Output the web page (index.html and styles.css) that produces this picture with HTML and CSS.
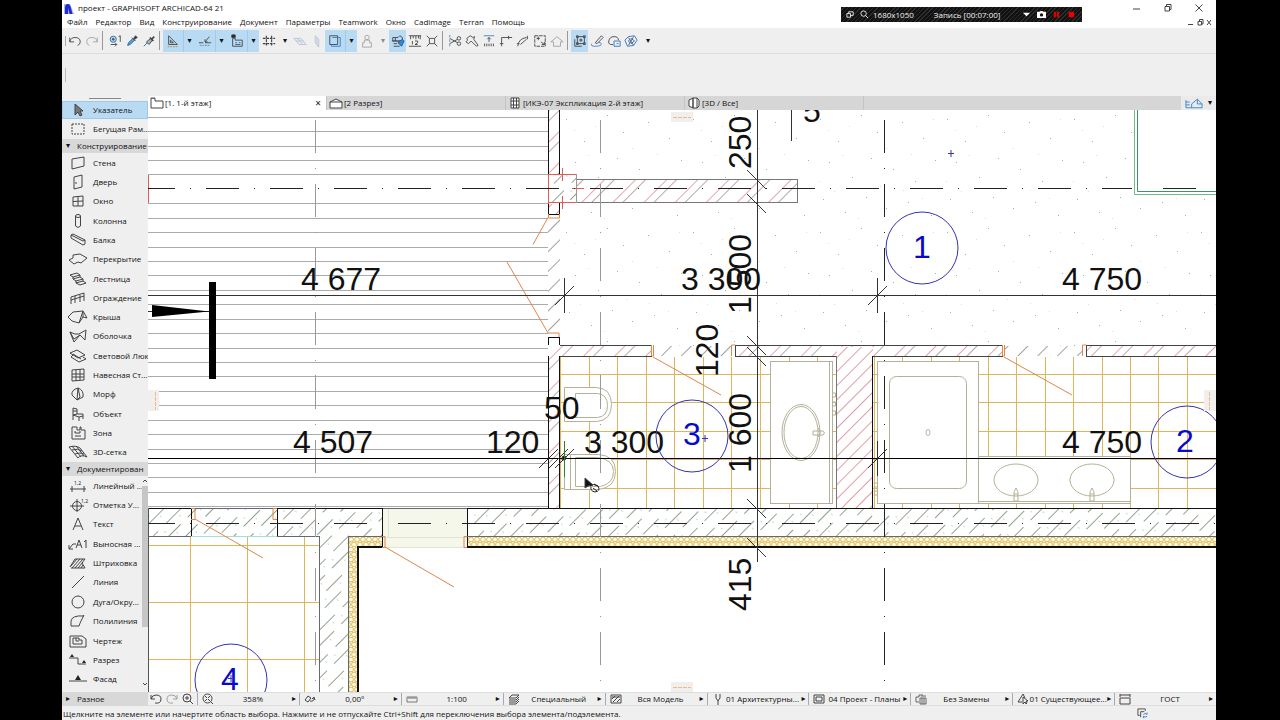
FILE: index.html
```html
<!DOCTYPE html>
<html lang="ru">
<head>
<meta charset="utf-8">
<title>проект - GRAPHISOFT ARCHICAD-64 21</title>
<link rel="stylesheet" href="styles.css">
</head>
<body>
<div class="app">
  <header class="titlebar">
    <svg class="logo" viewBox="0 0 10 11"><path d="M0 1h6l4 10H0z" fill="#a9b8ea"/><path d="M1 11V5q0-4 3-4 2 0 3 4l1.500 6h-3L4 5v6z" fill="#1f2bd0"/></svg>
    <h1>проект - GRAPHISOFT ARCHICAD-64 21</h1>
    <div class="wincontrols">
      <button aria-label="Свернуть"><svg viewBox="0 0 10 10"><path d="M1 6h7"/></svg></button>
      <button aria-label="Восстановить"><svg viewBox="0 0 10 10"><path d="M2 3.500h4.500v4.500H2zM3.500 3.500V1.500h4.500v5H6.500"/></svg></button>
      <button aria-label="Закрыть"><svg viewBox="0 0 10 10"><path d="M1.500 1.500l7 7M8.500 1.500l-7 7"/></svg></button>
    </div>
    <div class="recorder">
      <svg class="r-win" viewBox="0 0 10 10"><path d="M1 4h4v4H1zM3 4V2h5v4H5" /></svg>
      <svg class="r-mag" viewBox="0 0 10 10"><circle cx="4" cy="4" r="3"/><path d="M6 6l3 3"/></svg>
      <span class="r-size">1680x1050</span>
      <span class="r-time">Запись [00:07:00]</span>
      <svg class="r-down" viewBox="0 0 10 10"><path d="M1 3h8L5 7z" fill="#fff" stroke="none"/></svg>
      <svg class="r-cam" viewBox="0 0 10 10"><path d="M0 2h3l1-1h2l1 1h3v7H0z" fill="#fff" stroke="none"/><circle cx="5" cy="5.500" r="1.800" fill="#111" stroke="none"/></svg>
      <svg class="r-pause" viewBox="0 0 10 10"><path d="M2 2h2.500v6H2zM5.500 2H8v6H5.500z" fill="#d00" stroke="none"/></svg>
      <svg class="r-stop" viewBox="0 0 10 10"><path d="M2 2h6v6H2z" fill="#e00" stroke="none"/></svg>
    </div>
  </header>

  <nav class="menu">
    <button>Файл</button><button>Редактор</button><button>Вид</button><button>Конструирование</button><button>Документ</button><button>Параметры</button><button>Teamwork</button><button>Окно</button><button>Cadimage</button><button>Terran</button><button>Помощь</button>
    <span class="mdi"><svg viewBox="0 0 26 8"><path d="M1 6.500h5M11 3.500h3.500V7H11zM12.500 3.500V1.500H16V6h-1.500M20 2l4 5M24 2l-4 5"/></svg></span>
  </nav>

  <div class="toolbar">
    <i class="grip"></i>
    <button aria-label="Отменить"><svg viewBox="0 0 16 16"><path d="M2 4v5h5M2 9q1-5 6-5 6 0 6 5 0 3-3 4"/></svg></button>
    <button aria-label="Повторить" class="off"><svg viewBox="0 0 16 16"><path d="M14 4v5H9M14 9q-1-5-6-5-6 0-6 5 0 3 3 4"/></svg></button>
    <i class="sep"></i>
    <button aria-label="Найти и выбрать"><svg viewBox="0 0 16 16"><circle cx="6" cy="6" r="3.500" fill="#bcd8f0" stroke="#26639d"/><circle cx="6" cy="6" r="1" fill="#26639d"/><path d="M3 12h7l-2-2M10 12l-2 2M12 3l2-1v7"/></svg></button>
    <button aria-label="Пипетка"><svg viewBox="0 0 16 16"><path d="M3 13l1-3 5-5 2 2-5 5z" fill="#5b9ddc" stroke="#26639d"/><path d="M8 4l4 4M10 5l2-3 2 2-3 2z" fill="#333"/></svg></button>
    <button aria-label="Перенести параметры"><svg viewBox="0 0 16 16"><path d="M2 14l4-4" stroke="#26639d"/><path d="M5 9l3 3 4-5-2-2z" fill="#9fb6cc"/><path d="M9 4l4 4M11 6l3-3" stroke-width="2"/></svg></button>
    <i class="sep"></i>
    <div class="split on"><button aria-label="Направляющие"><svg viewBox="0 0 16 16"><path d="M3 2v10h10zM5 7v3h3.500z"/><path d="M2 14.500h12" stroke="#a78b4c" stroke-dasharray="2 1"/></svg></button><button class="dd" aria-label="Варианты направляющих">▾</button></div>
    <div class="split on"><button aria-label="Привязка"><svg viewBox="0 0 16 16"><path d="M1 10h5M8 10h7M8 9l5-6M8 6v3h3" /><path d="M2 13h11" stroke="#5689b8" stroke-dasharray="2 1"/></svg></button><button class="dd" aria-label="Варианты привязки">▾</button></div>
    <div class="split on"><button aria-label="Координаты"><svg viewBox="0 0 16 16"><path d="M3 5v9h11V7H6V5z"/><path d="M2 1h4v3H2z" fill="#222"/><path d="M6 10h2M10 10h2M6 12h6" stroke="#355b80"/></svg></button><button class="dd" aria-label="Варианты координат">▾</button></div>
    <div class="split"><button aria-label="Сетка"><svg viewBox="0 0 16 16"><path d="M5 2v12M11 2v12M1 5h14M1 11h14" stroke-width="1.300" stroke-dasharray="3 1"/></svg></button><button class="dd" aria-label="Варианты сетки">▾</button></div>
    <button aria-label="Плоскость" class="pale"><svg viewBox="0 0 16 16"><path d="M1 5h8l6 7H7zM4 8h8M5 5l6 7" fill="#dce8f3" stroke="#5f84a8"/></svg></button>
    <button aria-label="Вертикальная плоскость" class="pale"><svg viewBox="0 0 16 16"><path d="M6 2l4 4v9l-4-5zM8 4v8" fill="#dce3ee" stroke="#5f84a8"/></svg></button>
    <div class="split on"><button aria-label="Трассировка"><svg viewBox="0 0 16 16"><path d="M2 2h9v10H2z"/><path d="M5 4h9v10H4v-2" stroke="#2f7bd0"/></svg></button><button class="dd" aria-label="Варианты трассировки">▾</button></div>
    <div class="split off"><button aria-label="Гравитация"><svg viewBox="0 0 16 16"><circle cx="8" cy="4" r="2.500"/><path d="M5 7h6v3h2v5H3v-5h2z"/></svg></button><button class="dd" aria-label="Варианты гравитации">▾</button></div>
    <button aria-label="Группы" class="on"><svg viewBox="0 0 16 16"><path d="M2 8V4h6l2-2 3 2v4zM5 4v4M1 8h12M3 11h4M3 14h7"/><path d="M8 10l5-4 2 2-3 6z" fill="#2f8be0" stroke="#155a9c"/></svg></button>
    <button aria-label="Линейка"><svg viewBox="0 0 16 16"><path d="M1 2h14M3 2v4M6 2v3M9 2v4M12 2v3M1 14h14M5 8v4M8 8h3v2l-3 2h3M14 2v4"/></svg></button>
    <button aria-label="Начало координат"><svg viewBox="0 0 16 16"><path d="M5 5h6v6H5zM2 2l3 3M14 2l-3 3M2 14l3-3M14 14l-3-3"/></svg></button>
    <i class="sep"></i>
    <button aria-label="Разрезать"><svg viewBox="0 0 16 16"><circle cx="12.500" cy="5" r="2"/><circle cx="12.500" cy="11" r="2"/><path d="M11 6l-9 5M11 10L2 5"/><path d="M2 1v14" stroke="#6684ab" stroke-dasharray="3 2"/></svg></button>
    <button aria-label="Пересечь"><svg viewBox="0 0 16 16"><path d="M2 5l4-3 3 2 2-1-1 3 5 7-2 1-6-6-3 3-3-2 2-2z"/></svg></button>
    <button aria-label="Подогнать"><svg viewBox="0 0 16 16"><path d="M2 2h12" stroke="#3e7dd0"/><path d="M8 9V4M6 6l2-2 2 2M3 14v-3M5.500 14v-3M8 14v-3M10.500 14v-3M13 14v-3"/></svg></button>
    <button aria-label="Угол"><svg viewBox="0 0 16 16"><path d="M3 14V4h12M11 2v4M1 11h4"/></svg></button>
    <button aria-label="Сопряжение"><svg viewBox="0 0 16 16"><path d="M2 14q1-9 10-10M13 2v4M5 12l7-6M1 11h3"/></svg></button>
    <button aria-label="Изменить размер"><svg viewBox="0 0 16 16"><path d="M2 2h12v12H2z" stroke-dasharray="4 1"/><path d="M4 5h4M6 3v4M9 9l4 3M13 9v3h-3"/></svg></button>
    <button aria-label="Крыша" class="off"><svg viewBox="0 0 16 16"><path d="M1 9l7-6 7 6h-3v5H4V9z"/></svg></button>
    <i class="sep"></i>
    <button aria-label="Выбор" class="on"><svg viewBox="0 0 16 16"><path d="M5 3h8v8H5zM2 6v8h8M4 2h2v2H4zM12 2h2v2h-2zM12 10h2v2h-2zM4 10h2v2H4zM8 6h2v2H8z"/></svg></button>
    <button aria-label="Правка"><svg viewBox="0 0 16 16"><path d="M6 10l7-8 2 2-7 7z"/><path d="M2 11q-2 3 4 3 7 0 7-3-1-2-4-1" stroke="#3e7dd0"/></svg></button>
    <button aria-label="Облако"><svg viewBox="0 0 16 16"><path d="M7 12H4q-3-1-2-4 1-5 6-5 5 0 5 4"/><path d="M8 8h7v6H8zM11 11h2" stroke="#2f6fc0"/></svg></button>
    <button aria-label="Модель"><svg viewBox="0 0 16 16"><path d="M1 7l4-4 7-1 3 5-4 6-7 1z" stroke="#2f6fc0"/><path d="M5 4l6 9M11 3L5 13M8 5l4 3-4 3-3-3z" stroke="#3d5f8c"/></svg></button>
    <button class="dd last" aria-label="Ещё">▾</button>
  </div>

  <div class="infobox"><i></i></div>

  <div class="work">
    <aside class="toolbox">
      <i class="handle"></i>
      <button class="tool sel"><svg viewBox="0 0 20 14"><path d="M7 1v11l3-3 2 4 2-1-2-4h3z" fill="#777"/></svg><span>Указатель</span></button>
      <button class="tool marquee"><svg viewBox="0 0 20 14"><path d="M4 2h12v10H4z" stroke-dasharray="2 1"/></svg><span>Бегущая Рам...</span></button>
      <button class="group"><b>▾</b><span>Конструирование</span></button>
      <div class="tools design">
        <button class="tool"><svg viewBox="0 0 20 14"><path d="M4 3l12-2v9L4 13z"/></svg><span>Стена</span></button>
        <button class="tool"><svg viewBox="0 0 20 14"><path d="M6 2l8-2v12l-8 2zM8 7v2"/></svg><span>Дверь</span></button>
        <button class="tool"><svg viewBox="0 0 20 14"><path d="M5 3l10-1v10l-10 0zM10 2v10M5 7.500l10-.5"/></svg><span>Окно</span></button>
        <button class="tool"><svg viewBox="0 0 20 14"><ellipse cx="10" cy="2" rx="2.500" ry="1.500"/><path d="M7.500 2v10q2.500 3 5 0V2"/></svg><span>Колонна</span></button>
        <button class="tool"><svg viewBox="0 0 20 14"><path d="M3 2l2-1 12 6v4l-2 1L3 5zM3 2l12 6 2-1"/></svg><span>Балка</span></button>
        <button class="tool"><svg viewBox="0 0 20 14"><path d="M1 8l4-2V3l7-1 7 4-6 5-3-1-4 2z"/></svg><span>Перекрытие</span></button>
        <button class="tool"><svg viewBox="0 0 20 14"><path d="M2 3l7-2 3 2-7 2zM5 5v2l7-2V3M5 7l3 2 7-2-3-2M8 9v2l7-2V7M8 11l4 2 6-2-3-2"/></svg><span>Лестница</span></button>
        <button class="tool"><svg viewBox="0 0 20 14"><path d="M3 13V6l13-4v8M3 9l13-4M7 5v7M12 4v7"/></svg><span>Ограждение</span></button>
        <button class="tool"><svg viewBox="0 0 20 14"><path d="M0 7l5-5 10-1 4 7-4-1-4 6-7-2zM15 1l-4 12M15 7V2"/></svg><span>Крыша</span></button>
        <button class="tool"><svg viewBox="0 0 20 14"><path d="M2 3q5 3 9 2l7-4-1 10-5-5-6 7zM2 3l4 7 6-4"/></svg><span>Оболочка</span></button>
        <button class="tool"><svg viewBox="0 0 20 14"><path d="M2 4l7-3 8 5-7 3zM5 6l-2 2 8 5 7-3-3-2M5 5l8 5"/></svg><span>Световой Люк</span></button>
        <button class="tool"><svg viewBox="0 0 20 14"><path d="M4 2l12-1v11L4 13zM8 2v11M12 1v11M4 6h12M4 9h12"/></svg><span>Навесная Ст...</span></button>
        <button class="tool"><svg viewBox="0 0 20 14"><path d="M10 1Q3 3 4 8l5 5 6-3q1-7-5-9zM10 1L9 13M10 1l2 9-3 3"/></svg><span>Морф</span></button>
        <button class="tool"><svg viewBox="0 0 20 14"><path d="M5 1l4 1v5l6 0v5M5 1v12M5 8l6 2v4M9 7l-4 1M11 10l4-1M5 4h4"/></svg><span>Объект</span></button>
        <button class="tool"><svg viewBox="0 0 20 14"><path d="M4 1h5v3h3V1h1v3h4v9H4zM7 5v2h5V5M7 10h6"/></svg><span>Зона</span></button>
        <button class="tool"><svg viewBox="0 0 20 14"><path d="M1 2q7-2 11 1l7 9q-6-3-9 1zM4 1l9 11M8 1l8 10M4 5q6-2 10 1M7 9q5-2 9 0"/></svg><span>3D-сетка</span></button>
      </div>
      <button class="group"><b>▾</b><span>Документирован</span></button>
      <div class="tools doc">
        <button class="tool"><svg viewBox="0 0 20 14"><path d="M2 10h16M4 7v6M16 7v6"/><text x="6" y="6">1,2</text></svg><span>Линейный ...</span></button>
        <button class="tool"><svg viewBox="0 0 20 14"><circle cx="9" cy="8" r="4.500"/><path d="M2 8h14M9 1v13"/><text x="13" y="5">1,2</text></svg><span>Отметка У...</span></button>
        <button class="tool"><svg viewBox="0 0 20 14"><path d="M5 13l5-12 5 12M7 9h6"/></svg><span>Текст</span></button>
        <button class="tool"><svg viewBox="0 0 20 14"><path d="M1 12l4-5h3M1 8v4h4"/><path d="M8 11l3-8 3 8M9 8h4M16 5l2-2v8"/></svg><span>Выносная ...</span></button>
        <button class="tool"><svg viewBox="0 0 20 14"><path d="M2 11l5-8h10l-3 4 3 5H3M4 12L12 3M7 12l8-9M10 12l5-6M13 12l2-3M3 10l6-7"/></svg><span>Штриховка</span></button>
        <button class="tool"><svg viewBox="0 0 20 14"><path d="M4 13L16 1"/></svg><span>Линия</span></button>
        <button class="tool"><svg viewBox="0 0 20 14"><circle cx="10" cy="7" r="6"/></svg><span>Дуга/Окру...</span></button>
        <button class="tool"><svg viewBox="0 0 20 14"><path d="M16 1L13 7q-1 2-2 5H3V7q1-6 13-5"/></svg><span>Полилиния</span></button>
        <button class="tool"><svg viewBox="0 0 20 14"><path d="M2 2h12l4 3v8H2zM5 4v6h9V6h-3V4zM8 4v3h3"/></svg><span>Чертеж</span></button>
        <button class="tool"><svg viewBox="0 0 20 14"><path d="M1 5h9v6h8"/><path d="M2 4l2-3 2 3zM14 10l2-3 2 3z" fill="#222" stroke="none"/></svg><span>Разрез</span></button>
        <button class="tool"><svg viewBox="0 0 20 14"><path d="M1 9h18"/><path d="M7 8l3-5 3 5z" fill="#222" stroke="none"/></svg><span>Фасад</span></button>
        <div class="scroll"><svg viewBox="0 0 6 6"><path d="M1 4l2-2 2 2"/></svg><i></i><svg viewBox="0 0 6 6"><path d="M1 2l2 2 2-2"/></svg></div>
      </div>
      <button class="group misc"><b>▸</b><span>Разное</span></button>
    </aside>

    <main class="view">
      <div class="tabs" role="tablist">
        <button class="tab active" role="tab"><svg viewBox="0 0 14 12"><path d="M1 1h4v3h8v7H1zM3 1v1"/></svg><span>[1. 1-й этаж]</span><b>×</b></button>
        <button class="tab" role="tab"><svg viewBox="0 0 14 12"><path d="M1 5l6-3 6 3v6H1zM1 5h12" fill="#fff"/></svg><span>[2 Разрез]</span></button>
        <button class="tab" role="tab"><svg viewBox="0 0 14 12"><path d="M3 1h8v10H3zM5.500 1v10M8.500 1v10M3 4h8M3 8h8" fill="#fff"/></svg><span>[ИКЭ-07 Экспликация 2-й этаж]</span></button>
        <button class="tab" role="tab"><svg viewBox="0 0 14 12"><path d="M6 1L2 3v6l4 2zM6 1h4v10H6zM10 1l2 2v6l-2 2" fill="#fff"/></svg><span>[3D / Все]</span></button>
        <button class="nav3d" aria-label="Навигатор"><svg viewBox="0 0 20 12"><path d="M1 3v8h17V7l-5-5-6 5v4M1 5h4M1 8h4M13 2v5h5" /></svg><span>▾</span></button>
      </div>

      <svg class="plan" viewBox="148 110 1068 582" preserveAspectRatio="xMinYMin slice">
        <defs>
          <pattern id="red" width="22" height="22" patternUnits="userSpaceOnUse" patternTransform="rotate(45)"><path d="M4.500 0v22" stroke="#d8808c" stroke-width=".7"/><path d="M11.500 0v22" stroke="#a08088" stroke-width=".7"/></pattern>
          <pattern id="pink" width="10" height="22" patternUnits="userSpaceOnUse" patternTransform="rotate(45)"><path d="M4.500 0v22" stroke="#d8707e" stroke-width=".7"/></pattern>
          <pattern id="conc" width="23" height="33" patternUnits="userSpaceOnUse" patternTransform="rotate(45)"><path d="M4.500 0v22M15.500 12v21M15.500 0v2" stroke="#5f7d5f" stroke-width=".7"/><path d="M9 6v1M19 20v1M10 28v1" stroke="#8fb59a"/></pattern>
          <pattern id="gap" width="14" height="44" patternUnits="userSpaceOnUse" patternTransform="rotate(45)"><path d="M5.500 0v44" stroke="#777" stroke-width=".7"/></pattern>
          <pattern id="ins" x="348" y="537" width="6" height="10" patternUnits="userSpaceOnUse"><rect width="6" height="10" fill="#fffbe6" stroke="none"/><circle cx="3" cy="2.500" r="2.400" stroke="#d0a82e" stroke-width=".8"/><circle cx="0" cy="7.500" r="2.400" stroke="#d0a82e" stroke-width=".8"/><circle cx="6" cy="7.500" r="2.400" stroke="#d0a82e" stroke-width=".8"/></pattern>
          <pattern id="dots" x="560" y="110" width="127" height="113" patternUnits="userSpaceOnUse"><path stroke="none" fill="#aaa" d="M6 9h1v1h-1zM24 31h1v1h-1zM47 5h1v1h-1zM63 22h1v1h-1zM88 12h1v1h-1zM109 28h1v1h-1zM15 52h1v1h-1zM38 67h1v1h-1zM57 48h1v1h-1zM79 59h1v1h-1zM101 71h1v1h-1zM121 50h1v1h-1zM9 89h1v1h-1zM31 102h1v1h-1zM52 87h1v1h-1zM72 98h1v1h-1zM94 92h1v1h-1zM117 105h1v1h-1z"/><path stroke="none" fill="#ddd" d="M14 20h1v1h-1zM35 16h1v1h-1zM72 38h1v1h-1zM97 44h1v1h-1zM119 9h1v1h-1zM28 45h1v1h-1zM5 71h1v1h-1zM66 76h1v1h-1zM89 80h1v1h-1zM44 108h1v1h-1zM108 88h1v1h-1zM20 81h1v1h-1z"/></pattern>
          <g id="tick"><path d="M-10-9L9 10"/></g>
          <g id="basin"><ellipse rx="22" ry="16"/><path d="M-2 21v-9l2-4 2 4v9zM-2 14h4"/></g>
        </defs>
        <rect x="148" y="110" width="1068" height="582" fill="#fff" stroke="none"/>
        <rect x="560" y="110" width="656" height="236" fill="url(#dots)" stroke="none"/>

        <g class="boards"><path d="M148 117.500h400M148 131.500h400M148 146.500h400M148 160.500h400M148 174.500h400M148 203.500h400M148 218.500h400M148 232.500h400M148 247.500h400M148 261.500h400M148 275.500h400M148 290.500h400M148 304.500h400M148 319.500h400M148 333.500h400M148 348.500h400M148 362.500h400M148 376.500h400M148 391.500h400M148 405.500h400M148 420.500h400M148 434.500h400M148 449.500h400M148 463.500h400M148 477.500h400M148 492.500h400M148 506.500h400"/></g>

        <g class="tiles">
          <path d="M589.500 357v151M617.500 357v151M646.500 357v151M674.500 357v151M703.500 357v151M731.500 357v151M760.500 357v151M789.500 357v151M817.500 357v151M560 374.500h276M560 402.500h276M560 431.500h276M560 459.500h276M560 488.500h276M560.500 357v151"/>
          <path d="M902.500 357v151M931.500 357v151M959.500 357v151M988.500 357v151M1016.500 357v151M1045.500 357v151M1073.500 357v151M1102.500 357v151M1130.500 357v151M1158.500 357v151M1187.500 357v151M873 374.500h343M873 402.500h343M873 431.500h343M873 459.500h343M873 488.500h343M874.500 357v151"/>
          <path d="M190.500 537v155M247.500 537v155M304.500 537v155M148 545.500h171M148 602.500h171M148 659.500h171"/>
        </g>

        <g class="walls">
          <rect x="548" y="110" width="12" height="64" fill="#fff"/><rect x="548" y="110" width="12" height="64" fill="url(#red)"/>
          <rect x="548" y="204" width="12" height="10" fill="url(#pink)"/>
          <rect x="548" y="218" width="12" height="115" fill="#fff"/><rect x="548" y="218" width="12" height="115" fill="url(#gap)"/>
          <rect x="548" y="346" width="12" height="162" fill="#fff"/><rect x="548" y="346" width="12" height="162" fill="url(#red)"/>
          <path class="k" d="M548.500 110v64M559.500 110v64M548.500 203v11h11v-11M548.500 345v-8h11v8M548.500 356v152M559.500 356v152"/>
          <rect x="576.500" y="179.500" width="221" height="23" fill="#fff"/><rect class="g" x="576.500" y="179.500" width="221" height="23" fill="url(#red)"/>
          <rect x="548.500" y="174.500" width="28" height="28" fill="#fff"/><rect x="548.500" y="174.500" width="28" height="28" fill="url(#conc)" stroke="#999"/>
          <path d="M562.500 168v13M562.500 196v13M541 188.500h12M572 188.500h12M548 202.500h28M148.500 175v28M148 188.500h8M548.500 174v30M548 174.500h28" stroke="#e25b5b"/>
          <path d="M560 345.500h91v11h-91M735.500 356.500v-11H1002.500v11H873M1216 345.500h-130v11h130M735 356.500h101" fill="url(#red)" stroke="#444"/>
          <rect x="837" y="347" width="36" height="161" fill="#fff"/><rect x="837" y="347" width="36" height="161" fill="url(#pink)"/><path class="g" d="M836.500 356v152"/><path class="k" d="M872.500 356v152"/>
          <rect x="655" y="346" width="78" height="10" fill="url(#gap)"/><rect x="1005" y="346" width="78" height="10" fill="url(#gap)"/>
          <rect x="148" y="508" width="1068" height="29" fill="#fff"/><rect x="148" y="508" width="1068" height="29" fill="url(#conc)"/>
          <rect x="320" y="537" width="28" height="155" fill="#fff"/><rect x="320" y="537" width="28" height="155" fill="url(#conc)"/>
          <path d="M348 537h34v10h-24v145h-10zM467 537h749v10H467z" fill="url(#ins)"/>
          <rect x="383" y="509" width="84" height="39" fill="#f4f7e9"/><path d="M388.500 509v28M383 537.500h84M383 547.500h84" stroke="#dfe6cd"/>
          <path class="k" d="M148 508.500h43M277 508.500h106M467 508.500h749M191.500 508v29M277.500 508v29M382.500 508v39M467.500 508v39"/>
          <path d="M191 508.500h86M148 536.500h43M277 536.500h43M319.500 537v155M348.500 692v-156h34M467 536.500h749M383 508.500h84" stroke="#667"/>
          <path d="M191 536.500h86" stroke="#9fe0d8"/>
          <path d="M383 547H358v145M467 547h749" stroke="#111" stroke-width="2"/>
          <path d="M148.500 508v184" stroke="#555"/>
        </g>

        <g class="fixtures">
          <rect x="770.500" y="361.500" width="62" height="142"/><path d="M829.500 362v141"/><ellipse cx="801" cy="432.500" rx="19" ry="28"/><ellipse cx="801" cy="432.500" rx="17" ry="26"/><path d="M813 431h10q3 2 0 4h-10zM818 428q4 4 0 9M832.500 393h3v4h-3M832.500 402h3v4h-3M832.500 411h3v4h-3"/>
          <path class="solid" d="M564.500 387.500h32q15 1 15 17t-15 17h-32zM575.500 393.500h22q10 1 10 12t-10 12h-22z"/>
          <path class="solid" d="M564.500 454.500h34q17 1 17 17t-17 18h-34zM575.500 457.500h22q16 2 16 14t-13 15h-25z"/><path d="M570.500 455v35"/>
          <rect x="877.500" y="361.500" width="101" height="142"/><rect x="889.500" y="376.500" width="77" height="112" rx="7"/><ellipse cx="928" cy="432.500" rx="2" ry="3"/>
          <path d="M873.500 483h4M873.500 487h4M873.500 491h4M873.500 495h4"/>
          <rect x="978.500" y="456.500" width="152" height="47"/><path d="M979 501.500h151"/>
          <use href="#basin" x="1016" y="480"/><use href="#basin" x="1092" y="480"/>
        </g>

        <g class="doors">
          <path d="M548 217.500l-15 27M559.500 214v4h-11v-4M507 262l41 71h11v4M651.500 345v11h2v-11M653 357l68 38M731.500 356v-11h4M1002.500 345v11h2v-11M1004 357l68 38M1082.500 356v-11h4M191 508.500h4v11h-4M195 519l68 39M277 508.500h-4v11h4M382 536.500h3v11h-3M385 547l69 40M467 536.500h-3v11h3"/>
        </g>

        <path d="M1216 191.500h-79V110h79z" fill="#fff" stroke="none"/><path d="M1137.500 110v81.500H1216" stroke="#3d9464"/><path d="M1134.500 110v84.500H1216" stroke="#6fb98c"/>

        <g class="axes">
          <path d="M142 188.500h990M1163 188.500h33M142 523.500h1074"/>
          <path class="light" d="M315.500 55.500V692M600.500 55.500V692"/>
          <path d="M884.500 55.500V692"/>
        </g>

        <g class="dims">
          <path d="M148 295.500h1068M757.500 110v452M791.500 110v31M564.500 278v35M877.500 278v35M877.500 441v35"/>
          <path class="heavy" d="M148 458.500h1068"/>
          <path d="M555 305l19-19M868 305l19-19M868 468l19-19M555 468l19-19M549 468l19-19M539 468l19-19"/>
          <use href="#tick" x="757" y="179"/><use href="#tick" x="757" y="203"/><use href="#tick" x="757" y="345"/><use href="#tick" x="757" y="356"/><use href="#tick" x="757" y="508"/><use href="#tick" x="757" y="547"/>
          <circle cx="564" cy="458" r="2" fill="#111"/><path d="M564.500 441v36" stroke="#2e7d32"/>
          <path d="M148 311.500h61" /><path d="M152 305l57 6.500L152 317zM209 282h7v97h-7z" fill="#000" stroke="none"/>
        </g>

        <g class="num">
          <text x="301" y="290">4 677</text><text x="681" y="290">3 300</text><text x="1062" y="290">4 750</text>
          <text x="293" y="453">4 507</text><text x="486" y="453">120</text><text x="584" y="453">3 300</text><text x="1062" y="453">4 750</text>
          <text x="544" y="419">50</text><text x="803" y="122">5</text>
          <text transform="translate(751 169) rotate(-90)">250</text>
          <text transform="translate(751 314) rotate(-90)">1 500</text>
          <text transform="translate(718 377) rotate(-90)">120</text>
          <text transform="translate(751 473) rotate(-90)">1 600</text>
          <text transform="translate(751 611) rotate(-90)">415</text>
        </g>

        <g class="rooms">
          <circle cx="922" cy="248" r="36"/><circle cx="692" cy="436" r="36"/><circle cx="1187" cy="442" r="36"/><circle cx="231" cy="680" r="36"/>
          <text x="922" y="258">1</text><text x="692" y="445">3</text><text x="1185" y="452">2</text><text x="230" y="690">4</text>
          <path d="M948 153.500h6M951 150v7M702 438.500h6M705 435v7M228 678.500h6M231 675v7"/>
        </g>

        <g class="marks">
          <path d="M671 112h22v10h-22zM671 682h22v10h-22zM148 390h11v21h-11zM1204 390h12v21h-12z" fill="#f1efed"/>
          <path d="M673 117.500h18M673 687.500h18M155.500 392v18M1209.500 392v18" stroke="#f1b98a" stroke-dasharray="4 1"/>
        </g>
        <path d="M585 478v10l3-2 5-1z" fill="#111"/><path d="M590 486q3-3 8 0 3 5-3 6-5-1-4-5M594 484l4 2M593 488l4 3" fill="none" stroke="#222"/>
      </svg>

      <div class="quick">
        <div class="zoomers">
          <button aria-label="Назад"><svg viewBox="0 0 12 12"><path d="M1 2v4h4M1 6q1-4 5-4 5 0 5 4 0 5-6 4"/></svg></button>
          <button aria-label="Вперёд" class="off"><svg viewBox="0 0 12 12"><path d="M11 2v4H7M11 6q-1-4-5-4-5 0-5 4 0 5 6 4"/></svg></button>
          <button aria-label="Увеличить"><svg viewBox="0 0 12 12"><circle cx="5" cy="5" r="4"/><path d="M8 8l3 3M3 5h4M5 3v4"/></svg></button>
        </div>
        <button class="opt"><svg viewBox="0 0 12 12"><circle cx="5.500" cy="5.500" r="4.500"/><path d="M9 9l2 2M3 3l2 2M8 3L6 5M3 8l2-2M8 8L6 6"/></svg><span>358%</span><b>▸</b></button>
        <button class="opt"><svg viewBox="0 0 12 12"><path d="M1 7l3-4 3 2-3 4zM6 8q4 1 4-3M8 6l2-2 1 3"/></svg><span>0,00°</span><b>▸</b></button>
        <button class="opt"><svg viewBox="0 0 12 12"><path d="M1 4h10v5H1zM3 4v2M5 4v2M7 4v2M9 4v2" stroke="#777"/></svg><span>1:100</span><b>▸</b></button>
        <button class="opt"><svg viewBox="0 0 12 12"><path d="M1 5l3-3h7L8 5zM1 7h7l3-3M1 9h7l3-3M1 11h7l3-3"/></svg><span>Специальный</span><b>▸</b></button>
        <button class="opt"><svg viewBox="0 0 12 12"><path d="M1 2h10v8H1zM2 6l3-3M3 9l6-6M7 9l3-3M2 4h8"/></svg><span>Вся Модель</span><b>▸</b></button>
        <button class="opt"><svg viewBox="0 0 12 12"><path d="M4 1v4l2 3 2-3V1M6 8v4"/></svg><span>01 Архитектурны...</span><b>▸</b></button>
        <button class="opt"><svg viewBox="0 0 12 12"><path d="M1 2h10v8H1zM3 4h6v4H3z"/></svg><span>04 Проект - Планы</span><b>▸</b></button>
        <button class="opt"><svg viewBox="0 0 12 12"><path d="M1 4h3V2h4M1 4v5h3M5 5h6v6H5zM7 5v6M9 5v6M6 3h5" stroke="#666"/></svg><span>Без Замены</span><b>▸</b></button>
        <button class="opt"><svg viewBox="0 0 12 12"><path d="M1 9l5-8 2 4M1 9h4M6 4v7l2-2 1 2 1-1-1-2h2z"/></svg><span>01 Существующее...</span><b>▸</b></button>
        <button class="opt"><svg viewBox="0 0 12 12"><path d="M1 5h10v6H1zM1 2h10M1 1v3M11 1v3"/></svg><span>ГОСТ</span><b>▸</b></button>
      </div>
    </main>
  </div>

  <footer class="status">
    <span>Щелкните на элементе или начертите область выбора. Нажмите и не отпускайте Ctrl+Shift для переключения выбора элемента/подэлемента.</span>
    <svg viewBox="0 0 12 12"><path d="M3 8H1V1h8v2M4 10V4h4"/><path d="M7 7q2-2 4 0M11 5v2M11 9q-2 2-4 0M7 11V9" stroke="#2f7bd0"/></svg>
  </footer>
</div>
</body>
</html>
```
FILE: styles.css
```css
* { box-sizing: border-box; }
body { margin: 0; background: #000; font: 8px/12px "Open Sans", "Noto Sans", sans-serif; color: #111; }
button { font: inherit; color: inherit; background: none; border: 0; padding: 0; margin: 0; }
svg { flex: none; display: block; fill: none; stroke: #444; stroke-width: 1; }
text { stroke: none; fill: #111; }

.app { display: flex; flex-direction: column; height: 100vh; margin: 0 64px 0 62px; background: #efefef; overflow: hidden; position: relative; }

.titlebar { height: 16px; display: flex; align-items: center; background: #fff; padding: 0 12px 0 2px; }
.logo { width: 10px; height: 11px; stroke: none; margin-right: 4px; }
h1 { font-size: 8px; font-weight: 400; margin: 0; }
.wincontrols { margin-left: auto; display: flex; gap: 21px; }
.wincontrols svg { width: 10px; height: 10px; }
.recorder { position: absolute; top: 7px; right: 134px; width: 241px; height: 15px; display: flex; align-items: center; padding: 0 6px 0 5px; color: #eee; background: repeating-linear-gradient(135deg, #111 0 2px, #2c2c2c 2px 3px); }
.recorder svg { width: 9px; height: 9px; stroke: #eee; }
.r-mag { margin-left: 5px; }
.r-size { margin-left: 4px; }
.r-time { margin-left: 20px; }
.r-down { margin-left: auto; }
.r-cam, .r-pause, .r-stop { margin-left: 6px; }

.menu { height: 12px; display: flex; gap: 8px; align-items: center; background: #fff; padding: 0 3px 0 5px; }
.mdi { margin-left: auto; }
.mdi svg { width: 26px; height: 8px; }

.toolbar { height: 26px; display: flex; align-items: center; border-bottom: 1px solid #dcdcdc; padding-left: 3px; }
.toolbar button { width: 17px; height: 22px; flex: none; display: flex; align-items: center; justify-content: center; }
.toolbar svg { width: 14px; height: 14px; }
.toolbar .grip { width: 1px; height: 10px; background: #aaa; }
.toolbar .sep { width: 1px; height: 19px; background: #999; margin: 0 3px 0 2px; }
.split { display: flex; }
.toolbar .split button { width: 20px; }
.toolbar .dd { width: 12px; font: 8px/8px "DejaVu Sans", sans-serif; }
.toolbar .split .dd { width: 12px; }
.toolbar .last { margin-left: 3px; }
.on { background: #b9daf3; }
.on .dd { border-left: 1px solid #a3cbe9; }
.off { opacity: 0.45; }
.pale { opacity: 0.4; }

.infobox { height: 42px; display: flex; align-items: center; padding-left: 3px; }
.infobox i { width: 1px; height: 14px; background: #bbb; }

.work { flex: 1; min-height: 0; display: flex; }
.toolbox { width: 86px; flex: none; display: flex; flex-direction: column; }
.handle { flex: none; width: 32px; height: 1px; background: #888; margin: 2px auto; }
.tool { display: flex; align-items: center; width: 100%; padding-left: 6px; gap: 5px; text-align: left; white-space: nowrap; flex: 1 1 0; min-height: 0; }
.tool svg { width: 20px; height: 14px; overflow: visible; }
.tool text { font-size: 5px; }
.tool.sel { flex: none; height: 18px; background: #b9daf3; outline: 1px solid #9fc9e8; outline-offset: -1px; }
.tool.marquee { flex: none; height: 20px; }
.group { flex: none; height: 14px; width: 86px; display: flex; align-items: center; background: #d8d8d8; gap: 4px; padding-left: 4px; text-align: left; }
.group b { width: 7px; font: 8px/8px "DejaVu Sans", sans-serif; flex: none; }
.group span { white-space: nowrap; }
.tools { display: flex; flex-direction: column; min-height: 0; }
.design { flex: 309 1 0; }
.doc { flex: 213 1 0; position: relative; }
.scroll { position: absolute; top: 0; right: 0; bottom: 0; width: 6px; display: flex; flex-direction: column; background: #efefef; }
.scroll svg { width: 6px; height: 6px; margin: 2px 0; }
.scroll i { height: 66%; background: #c6c6c6; margin-bottom: auto; }
.misc { margin-top: 3px; }

.view { flex: 1; min-width: 0; display: flex; flex-direction: column; }
.tabs { height: 14px; flex: none; display: flex; background: #d6d6d6; }
.tab { flex: 0 1 179px; display: flex; align-items: center; gap: 1px; padding: 0 5px 0 2px; border-right: 1px solid #c4c4c4; white-space: nowrap; }
.tab svg { width: 14px; height: 12px; }
.tab b { margin-left: auto; font-weight: 400; font-size: 10px; }
.active { background: #fff; }
.nav3d { margin-left: auto; width: 35px; display: flex; align-items: center; gap: 4px; padding-left: 4px; background: #eaeaea; font-family: "DejaVu Sans", sans-serif; }
.nav3d svg { width: 19px; height: 12px; stroke: #3e86cc; }

.plan { flex: 1 1 0; min-height: 0; width: 100%; }
.boards, .tiles, .walls, .axes { shape-rendering: crispEdges; }
.boards { stroke: #ababab; }
.tiles { stroke: #dcb658; }
.walls { stroke: none; }
.walls .k { stroke: #111; }
.walls .g { stroke: #777; }
.fixtures { stroke: #b3b197; }
.fixtures rect, .fixtures ellipse, .fixtures .solid { fill: #fff; }
.doors { stroke: #df8649; }
.axes { stroke: #222; stroke-dasharray: 33 15 1 15; }
.axes .light { stroke: #999; }
.dims { stroke: #333; }
.dims .heavy { stroke: #000; }
.num { font: 32px "Liberation Sans", Arial, sans-serif; }
.rooms { font: 32px "Liberation Sans", Arial, sans-serif; stroke: #3434b4; text-anchor: middle; }
.rooms text { fill: #0808cf; }
.marks { stroke: none; }

.quick { flex: none; height: 14px; display: flex; border-top: 1px solid #ddd; border-bottom: 1px solid #ddd; }
.zoomers { width: 49px; flex: none; display: flex; align-items: center; gap: 4px; padding-left: 2px; }
.quick svg { width: 12px; height: 12px; }
.opt { flex: 1 1 0; min-width: 0; display: flex; align-items: center; border-left: 1px solid #aaa; padding: 0 3px 0 4px; white-space: nowrap; }
.opt span { flex: 1; text-align: center; }
.opt b { font: 8px/8px "DejaVu Sans", sans-serif; }

.status { flex: none; height: 14px; display: flex; align-items: center; justify-content: space-between; padding: 1px 68px 0 1px; white-space: nowrap; }
.status svg { width: 11px; height: 11px; }
```
